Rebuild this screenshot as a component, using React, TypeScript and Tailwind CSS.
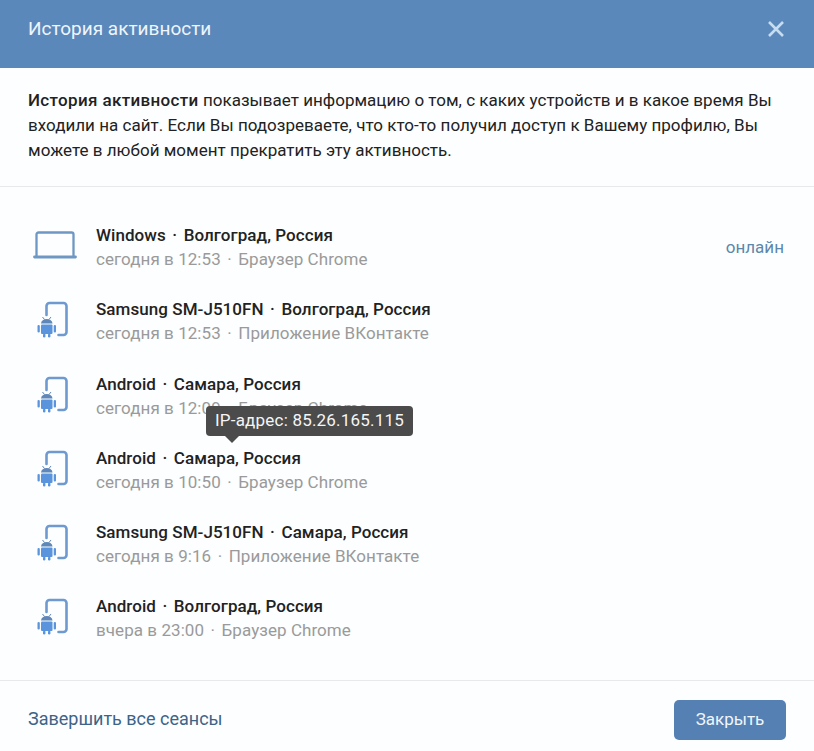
import React from "react";

const Laptop = () => (
  <svg width="44" height="29" viewBox="0 0 44 29" fill="none">
    <path d="M3.500 25V3.500a2 2 0 0 1 2-2h33a2 2 0 0 1 2 2V25" stroke="#6f97c3" strokeWidth="2.300" />
    <path d="M1.500 26h41" stroke="#6f97c3" strokeWidth="2.800" strokeLinecap="round" />
  </svg>
);

const Phone = () => (
  <svg width="34" height="40" viewBox="0 0 34 40" fill="none">
    <path d="M10.500 15V6a3 3 0 0 1 3-3h14a3 3 0 0 1 3 3v26a3 3 0 0 1-3 3h-5" stroke="#6f9ad0" strokeWidth="2.600" strokeLinecap="round" />
    <rect x="5" y="24.500" width="11.500" height="9.500" rx="1" fill="#5a94dc" />
    <path d="M5 23.500c.3-3 2.600-4.500 5.750-4.500s5.450 1.500 5.750 4.500z" fill="#5f88b8" />
    <path d="M6.500 17l2 2.500M15 17l-2 2.500" stroke="#5f88b8" strokeWidth="1" />
    <rect x="1.500" y="25" width="2.300" height="7.500" rx="1.100" fill="#5a94dc" />
    <rect x="17.700" y="25" width="2.300" height="7.500" rx="1.100" fill="#5a94dc" />
    <rect x="7" y="33.500" width="2.400" height="4" rx="1.200" fill="#5a94dc" />
    <rect x="12" y="33.500" width="2.400" height="4" rx="1.200" fill="#5a94dc" />
  </svg>
);

const rows = [
  { title: "Windows", place: "Волгоград, Россия", time: "сегодня в 12:53", app: "Браузер Chrome", laptop: true, online: true },
  { title: "Samsung SM-J510FN", place: "Волгоград, Россия", time: "сегодня в 12:53", app: "Приложение ВКонтакте" },
  { title: "Android", place: "Самара, Россия", time: "сегодня в 12:09", app: "Браузер Chrome", tip: true },
  { title: "Android", place: "Самара, Россия", time: "сегодня в 10:50", app: "Браузер Chrome" },
  { title: "Samsung SM-J510FN", place: "Самара, Россия", time: "сегодня в 9:16", app: "Приложение ВКонтакте" },
  { title: "Android", place: "Волгоград, Россия", time: "вчера в 23:00", app: "Браузер Chrome" },
];

export default function App() {
  return (
    <div className="w-[814px] h-[751px] overflow-hidden flex flex-col bg-[#fcfeff] text-[#222] font-['Roboto',sans-serif]">
      <header className="h-[68px] shrink-0 bg-[#5b88bb] flex items-center justify-between pl-[28px] pr-[28px] pb-[10px]">
        <h1 className="text-[19px] text-[#eef5fb] font-normal">История активности</h1>
        <svg width="20" height="20" viewBox="0 0 20 20">
          <path d="M3 3l14 14M17 3L3 17" stroke="#c6dcf1" strokeWidth="2.600" />
        </svg>
      </header>
      <section className="h-[119px] shrink-0 border-b border-[#e7e9ec] px-[28px] pt-[20px] text-[17px] leading-[25px] tracking-[0.02px]">
        <p><b className="font-medium tracking-[0.35px]">История активности</b> показывает информацию о том, с каких устройств и в какое время Вы входили на сайт. Если Вы подозреваете, что кто-то получил доступ к Вашему профилю, Вы можете в любой момент прекратить эту активность.</p>
      </section>
      <main className="flex-1 pt-[36px]">
        {rows.map((r, i) => (
          <div key={i} className="relative h-[74.300px] flex items-start pl-[28px] pr-[30px]">
            <div className="w-[68px] shrink-0 h-[50px]">
              {r.laptop ? <div className="mt-[8px] ml-[5px]"><Laptop /></div> : <div className="mt-[3px] ml-[8px]"><Phone /></div>}
            </div>
            <div className="flex-1 tracking-[0.06px]">
              <div className="text-[17px] leading-[24px] font-medium text-[#222]">{r.title}<span className="mx-[6.500px]">·</span>{r.place}</div>
              <div className="text-[17px] leading-[24px] text-[#9a9a9a]">{r.time}<span className="mx-[6.500px]">·</span>{r.app}</div>
            </div>
            {r.online && <div className="text-[17px] leading-[24px] mt-[12px] text-[#5d87ab]">онлайн</div>}
            {r.tip && (
              <div className="absolute left-[206px] top-[34px] h-[30px] w-[207px] rounded-[4px] bg-[#4b4b4b] text-[#f5f5f5] text-[17px] leading-[29px] text-center tracking-[0.2px]">
                IP-адрес: 85.26.165.115
                <span className="absolute left-[19px] top-full w-0 h-0 border-x-[7px] border-x-transparent border-t-[7px] border-t-[#4b4b4b]" />
              </div>
            )}
          </div>
        ))}
      </main>
      <footer className="h-[71px] shrink-0 border-t border-[#e7e9ec] flex items-center justify-between pl-[28px] pr-[28px]">
        <span className="text-[18px] text-[#3d6488] mt-[5px]">Завершить все сеансы</span>
        <button className="w-[112px] h-[40px] rounded-[5px] bg-[#5480b3] text-[#f0f6fc] text-[17px] mt-[8px]">Закрыть</button>
      </footer>
    </div>
  );
}
